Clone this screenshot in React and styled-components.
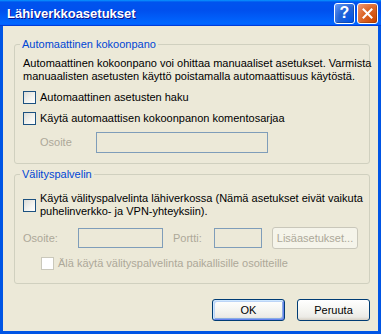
import React from "react";
import styled, { createGlobalStyle } from "styled-components";

const GlobalStyle = createGlobalStyle`
  html, body {
    margin: 0;
    padding: 0;
    background: #ffffff;
  }
  body {
    font-family: "Liberation Sans", Arial, sans-serif;
    font-size: 11px;
    color: #000000;
  }
`;

const Window = styled.div`
  width: 381px;
  height: 334px;
  display: flex;
  flex-direction: column;
`;

const TitleBar = styled.div`
  height: 26px;
  flex: none;
  display: flex;
  align-items: center;
  padding: 0 3px 0 7px;
  background: linear-gradient(
    180deg,
    #0997ff 0%,
    #0053ee 8%,
    #0050ee 40%,
    #0066ff 88%,
    #0066ff 93%,
    #005bff 95%,
    #003dd7 96%,
    #003dd7 100%
  );
`;

const Title = styled.span`
  flex: 1;
  font: bold 13px "Liberation Sans", Arial, sans-serif;
  color: #ffffff;
  text-shadow: 1px 1px #0f1089;
  letter-spacing: 0;
`;

const CaptionButton = styled.div`
  width: 21px;
  height: 21px;
  box-sizing: border-box;
  margin-left: 2px;
  border: 1px solid #ffffff;
  border-radius: 3px;
  display: flex;
  align-items: center;
  justify-content: center;
  color: #ffffff;
  font: bold 16px "Liberation Sans", Arial, sans-serif;
  background: ${(p) =>
    p.$close
      ? "radial-gradient(circle at 90% 90%, #cc4600 0%, #dc6527 55%, #f09b7a 100%)"
      : "radial-gradient(circle at 90% 90%, #0054e9 0%, #2263d5 55%, #6a9cf8 100%)"};
  box-shadow: inset -1px -1px rgba(0, 0, 0, 0.2);
`;

const Body = styled.div`
  flex: 1;
  box-sizing: border-box;
  background: #ece9d8;
  border: 3px solid #0055e5;
  border-top: none;
  padding: 12px 0 0 11px;
  display: flex;
  flex-direction: column;
`;

const Group = styled.fieldset`
  margin: ${(p) => p.$top || 0}px 0 0 0;
  padding: 0;
  width: 356px;
  min-width: 0;
  box-sizing: border-box;
  border: 1px solid #d0d0bf;
  border-radius: 3px;
`;

const Legend = styled.legend`
  margin-left: 5px;
  padding: 0 2px;
  color: #0046d5;
  line-height: 13px;
`;

const GroupContent = styled.div`
  padding: ${(p) => p.$pad};
  display: flex;
  flex-direction: column;
`;

const Line = styled.div`
  line-height: 13px;
  white-space: nowrap;
`;

const CheckRow = styled.div`
  display: flex;
  align-items: center;
  margin-top: ${(p) => p.$top || 0}px;
  padding-left: ${(p) => p.$indent || 0}px;
  color: ${(p) => (p.$disabled ? "#aca899" : "#000000")};
`;

const Box = styled.span`
  width: 13px;
  height: 13px;
  flex: none;
  box-sizing: border-box;
  border: 1px solid ${(p) => (p.$disabled ? "#cac8bb" : "#1c5180")};
  background: ${(p) =>
    p.$disabled
      ? "#ffffff"
      : "linear-gradient(135deg, #dcdcd7 0%, #f4f4f0 60%, #ffffff 100%)"};
`;

const CheckLabel = styled.div`
  margin-left: 4px;
  line-height: 13px;
  white-space: nowrap;
`;

const FieldRow = styled.div`
  display: flex;
  align-items: center;
  margin-top: ${(p) => p.$top || 0}px;
  padding-left: ${(p) => p.$indent || 0}px;
`;

const FieldLabel = styled.span`
  width: ${(p) => p.$w}px;
  flex: none;
  color: #aca899;
  line-height: 13px;
`;

const TextBox = styled.div`
  width: ${(p) => p.$w}px;
  height: ${(p) => p.$h}px;
  flex: none;
  box-sizing: border-box;
  border: 1px solid #7f9db9;
  background: #ece9d8;
  margin-right: ${(p) => p.$gap || 0}px;
`;

const Button = styled.button`
  width: ${(p) => p.$w || 73}px;
  height: 22px;
  flex: none;
  padding: 0;
  box-sizing: border-box;
  font: 11px "Liberation Sans", Arial, sans-serif;
  border-radius: 3px;
  border: 1px solid ${(p) => (p.disabled ? "#c9c7ba" : "#003c74")};
  color: ${(p) => (p.disabled ? "#aca899" : "#000000")};
  background: ${(p) =>
    p.disabled
      ? "#f5f4ea"
      : "linear-gradient(180deg, #ffffff 0%, #f4f4f0 55%, #ecebe6 85%, #d6d0c5 100%)"};
  box-shadow: ${(p) =>
    p.$default
      ? "inset 1px 1px #cee7ff, inset -1px -1px #6982ee, inset 2px 2px #bcd4f6, inset -2px -2px #89ade4"
      : "none"};
`;

const ButtonRow = styled.div`
  width: 356px;
  margin-top: 15px;
  display: flex;
  justify-content: flex-end;
  gap: 12px;
`;

const CloseIcon = () => (
  <svg width="11" height="11" viewBox="0 0 11 11">
    <path d="M1.5 1.5 L9.5 9.5 M9.5 1.5 L1.5 9.5" stroke="#ffffff" strokeWidth="2" strokeLinecap="square" />
  </svg>
);

export default function App() {
  return (
    <Window>
      <GlobalStyle />
      <TitleBar>
        <Title>Lähiverkkoasetukset</Title>
        <CaptionButton>?</CaptionButton>
        <CaptionButton $close>
          <CloseIcon />
        </CaptionButton>
      </TitleBar>
      <Body>
        <Group>
          <Legend>Automaattinen kokoonpano</Legend>
          <GroupContent $pad="6px 8px 10px 8px">
            <Line>Automaattinen kokoonpano voi ohittaa manuaaliset asetukset. Varmista</Line>
            <Line>manuaalisten asetusten käyttö poistamalla automaattisuus käytöstä.</Line>
            <CheckRow $top={8}>
              <Box />
              <CheckLabel>Automaattinen asetusten haku</CheckLabel>
            </CheckRow>
            <CheckRow $top={8}>
              <Box />
              <CheckLabel>Käytä automaattisen kokoonpanon komentosarjaa</CheckLabel>
            </CheckRow>
            <FieldRow $top={7} $indent={17}>
              <FieldLabel $w={56}>Osoite</FieldLabel>
              <TextBox $w={172} $h={21} />
            </FieldRow>
          </GroupContent>
        </Group>
        <Group $top={4}>
          <Legend>Välityspalvelin</Legend>
          <GroupContent $pad="11px 8px 13px 8px">
            <CheckRow>
              <Box />
              <CheckLabel>
                Käytä välityspalvelinta lähiverkossa (Nämä asetukset eivät vaikuta
                <br />
                puhelinverkko- ja VPN-yhteyksiin).
              </CheckLabel>
            </CheckRow>
            <FieldRow $top={9}>
              <FieldLabel $w={55}>Osoite:</FieldLabel>
              <TextBox $w={85} $h={20} $gap={10} />
              <FieldLabel $w={41}>Portti:</FieldLabel>
              <TextBox $w={48} $h={20} $gap={10} />
              <Button $w={86} disabled>
                Lisäasetukset...
              </Button>
            </FieldRow>
            <CheckRow $top={8} $indent={18} $disabled>
              <Box $disabled />
              <CheckLabel>Älä käytä välityspalvelinta paikallisille osoitteille</CheckLabel>
            </CheckRow>
          </GroupContent>
        </Group>
        <ButtonRow>
          <Button $default>OK</Button>
          <Button>Peruuta</Button>
        </ButtonRow>
      </Body>
    </Window>
  );
}
